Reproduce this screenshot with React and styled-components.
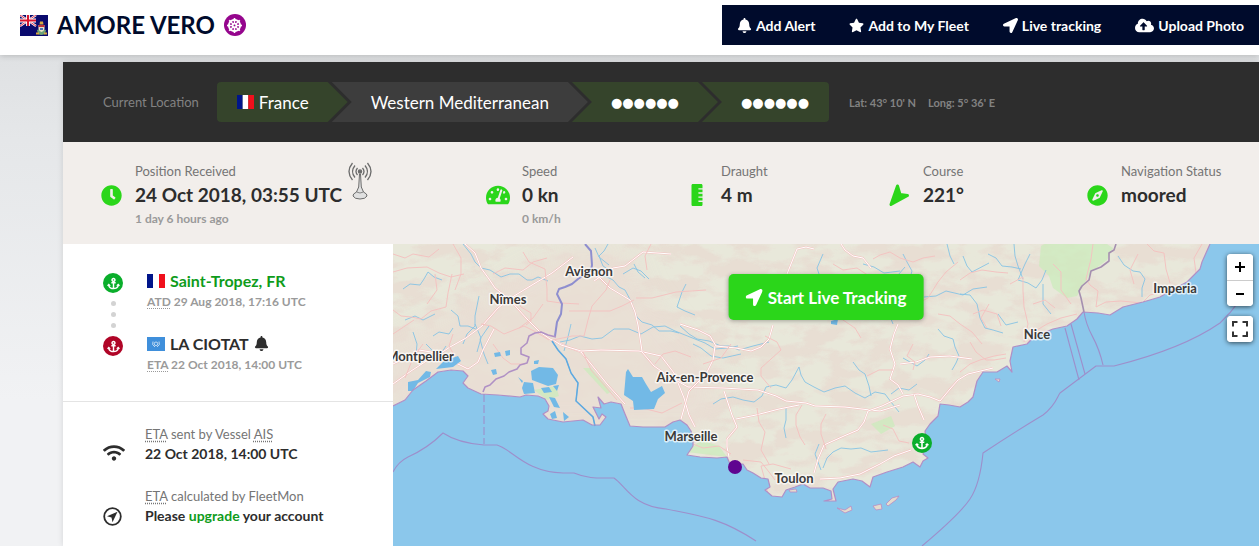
import React from 'react'
import styled, { createGlobalStyle } from 'styled-components'
import {
  FaAnchor,
  FaBell,
  FaClock,
  FaCloudUploadAlt,
  FaCompass,
  FaDharmachakra,
  FaLocationArrow,
  FaRulerVertical,
  FaStar,
  FaTachometerAlt,
  FaWifi
} from 'react-icons/fa'

const GlobalStyle = createGlobalStyle`
  * {
    box-sizing: border-box;
  }
  body {
    margin: 0;
    font-family: Lato, sans-serif;
    color: #2d2d2d;
    background: #eceeef;
  }
  button, a {
    font-family: inherit;
  }
`

const Page = styled.div`
  min-height: 100vh;
  display: flex;
  flex-direction: column;
  background: linear-gradient(#dfe1e3 55px, #e5e7e9 140px, #f1f2f4 400px);
`
const Header = styled.header`
  display: flex;
  justify-content: space-between;
  align-items: flex-start;
  height: 55px;
  padding: 5px 0 0 20px;
  background: #fff;
  box-shadow: 0 1px 6px rgba(0, 0, 0, 0.18);
`
const Title = styled.h1`
  display: flex;
  align-items: center;
  gap: 9px;
  margin: 0;
  font-size: 24px;
  line-height: 40px;
  font-weight: 700;
  color: #000b2c;
`
const Badge = styled.span`
  display: grid;
  place-items: center;
  width: ${(p) => p.$size}px;
  height: ${(p) => p.$size}px;
  border-radius: 50%;
  color: #fff;
  font-size: ${(p) => p.$icon}px;
  background: ${(p) => p.$color};
`
const Toolbar = styled.nav`
  display: flex;
  align-items: center;
  gap: 34px;
  height: 40px;
  padding: 0 15px;
  background: #000b2c;
`
const ToolbarButton = styled.button`
  display: flex;
  align-items: center;
  gap: 4px;
  padding: 0;
  border: 0;
  background: none;
  color: #fff;
  font-size: 14px;
  font-weight: 700;
  svg {
    font-size: 15px;
  }
`
const Card = styled.main`
  flex: 1;
  display: flex;
  flex-direction: column;
  margin: 7px 0 0 63px;
  background: #fff;
  box-shadow: 0 0 6px rgba(0, 0, 0, 0.12);
`
const LocationBar = styled.section`
  display: flex;
  align-items: center;
  height: 80px;
  padding-left: 40px;
  background: #2d2d2d;
  color: #828282;
  font-size: 13px;
`
const Crumbs = styled.div`
  display: flex;
  height: 40px;
  margin: 0 20px 0 18px;
  border-radius: 4px;
  overflow: hidden;
`
const Crumb = styled.div`
  display: flex;
  align-items: center;
  gap: 5px;
  padding: 0 39px;
  margin-right: -16px;
  color: #fff;
  font-size: 17px;
  background: ${(p) => (p.$plain ? '#3d3d3d' : '#35442b')};
  clip-path: polygon(0 0, calc(100% - 20px) 0, 100% 50%, calc(100% - 20px) 100%, 0 100%, 20px 50%);
  &:first-child {
    padding-left: 20px;
    clip-path: polygon(0 0, calc(100% - 20px) 0, 100% 50%, calc(100% - 20px) 100%, 0 100%);
  }
  &:last-child {
    padding-right: 20px;
    margin-right: 0;
    clip-path: polygon(0 0, 100% 0, 100% 100%, 0 100%, 20px 50%);
  }
`
const Dots = styled.span`
  font-family: 'DejaVu Sans', sans-serif;
  font-size: 13px;
`
const Coords = styled.span`
  display: flex;
  gap: 12px;
  font-size: 11px;
  font-weight: 700;
`
const Stats = styled.section`
  display: grid;
  grid-template-columns: 387fr 199fr 202fr 198fr 174fr;
  padding: 19px 0 15px 36px;
  background: #f2eeeb;
`
const StatBox = styled.div`
  display: flex;
  align-items: center;
  gap: 12px;
  white-space: nowrap;
`
const StatIcon = styled.span`
  display: grid;
  place-items: center;
  width: 24px;
  font-size: ${(p) => p.$size}px;
  color: #2bd61a;
`
const StatRow = styled.div`
  display: flex;
  gap: 6px;
`
const StatLabel = styled.div`
  font-size: 13px;
  line-height: 20px;
  color: #757575;
`
const StatValue = styled.div`
  font-size: 19px;
  line-height: 28px;
  font-weight: 700;
`
const StatNote = styled.div`
  height: 20px;
  font-size: 12px;
  line-height: 20px;
  font-weight: 700;
  color: #9a9a9a;
`
const Content = styled.div`
  flex: 1;
  display: flex;
`
const Side = styled.aside`
  flex: 0 0 330px;
`
const Voyage = styled.section`
  display: flex;
  gap: 24px;
  padding: 25px 20px 26px 40px;
  border-bottom: 1px solid #e4e4e4;
`
const Track = styled.div`
  display: flex;
  flex-direction: column;
  align-items: center;
  gap: 8px;
  width: 20px;
  padding-top: 4px;
`
const DotColumn = styled.div`
  display: grid;
  gap: 6px;
`
const Dot = styled.i`
  width: 5px;
  height: 5px;
  border-radius: 50%;
  background: #d3d3d3;
`
const Ports = styled.div`
  display: grid;
  gap: 20px;
`
const Port = styled.div`
  display: flex;
  align-items: center;
  gap: 5px;
  font-size: 16px;
  line-height: 23px;
  font-weight: 700;
`
const PortLink = styled.a`
  color: #0f9c1b;
  text-decoration: none;
`
const PortTime = styled.div`
  font-size: 12px;
  line-height: 20px;
  font-weight: 700;
  color: #9a9a9a;
`
const Abbr = styled.abbr`
  text-decoration: underline dotted;
  text-underline-offset: 2px;
`
const Estimates = styled.section`
  display: grid;
  gap: 22px;
  padding: 22px 20px 18px 40px;
`
const Estimate = styled.div`
  display: flex;
  align-items: flex-end;
  gap: 20px;
`
const EstimateIcon = styled.span`
  display: grid;
  width: 22px;
  font-size: 22px;
`
const EstimateLabel = styled.div`
  font-size: 13px;
  line-height: 20px;
  color: #757575;
`
const EstimateText = styled.div`
  font-size: 14px;
  line-height: 20px;
  font-weight: 700;
`
const MapBox = styled.section`
  position: relative;
  flex: 1;
  min-width: 0;
  background: #8bc7eb;
`
const Chart = styled.svg`
  position: absolute;
  inset: 0;
  width: 100%;
  height: 100%;
`
const City = styled.text`
  font-size: 13px;
  font-weight: 700;
  fill: #3a3a3a;
  stroke: #fff;
  stroke-width: 3px;
  stroke-linejoin: round;
  stroke-opacity: 0.7;
  paint-order: stroke;
`
const TrackButton = styled.button`
  position: absolute;
  top: 30px;
  left: 50%;
  transform: translateX(-50%);
  display: flex;
  align-items: center;
  gap: 5px;
  height: 46px;
  padding: 0 17px;
  border: 0;
  border-radius: 5px;
  background: #2bd61a;
  box-shadow: 0 1px 4px rgba(0, 0, 0, 0.3);
  color: #fff;
  font-size: 17px;
  font-weight: 700;
  white-space: nowrap;
`
const MapControls = styled.div`
  position: absolute;
  top: 10px;
  right: 6px;
  display: grid;
  gap: 10px;
`
const ControlGroup = styled.div`
  display: grid;
  border-radius: 4px;
  overflow: hidden;
  background: #fff;
  box-shadow: 0 1px 5px rgba(0, 0, 0, 0.65);
`
const ControlButton = styled.button`
  display: grid;
  place-items: center;
  width: 26px;
  height: 26px;
  padding: 0;
  border: 0;
  background: #fff;
  color: #000;
  & + & {
    border-top: 1px solid #ccc;
  }
`

const FrenchFlag = ({ width = 18 }) => (
  <svg width={width} height='14' viewBox='0 0 18 14' preserveAspectRatio='none'>
    <path fill='#00158a' d='M0 0h6v14H0z' />
    <path fill='#fff' d='M6 0h6v14H6z' />
    <path fill='#f0101c' d='M12 0h6v14h-6z' />
  </svg>
)

const UnFlag = () => (
  <svg width='18' height='14' viewBox='0 0 18 14'>
    <path fill='#3f8fdb' d='M0 0h18v14H0z' />
    <g fill='none' stroke='#dcebf9' strokeWidth='.8'>
      <path d='M6 4.500Q4.300 8 8 10M12 4.500Q13.700 8 10 10' />
      <circle cx='9' cy='6.800' r='1.800' />
    </g>
  </svg>
)

const CaymanFlag = () => (
  <svg width='28' height='21' viewBox='0 0 28 21'>
    <path fill='#0a0a6e' d='M0 0h28v21H0z' />
    <path stroke='#fff' strokeWidth='2.200' d='M0 0l16 11M16 0L0 11' />
    <path stroke='#e0203a' strokeWidth='.9' d='M0 0l16 11M16 0L0 11' />
    <path stroke='#fff' strokeWidth='3.800' d='M8 0v11M0 5.500h16' />
    <path stroke='#d8152f' strokeWidth='2' d='M8 0v11M0 5.500h16' />
    <path fill='#6da277' d='M17 15q4-2 9 0l-1 4q-4 2-7 0z' />
    <path fill='#e9e3c6' d='M18.500 10h6v4q-1 3-3 3t-3-3z' />
    <path fill='#c2333c' d='M18.500 10h6v2h-6z' />
    <path fill='#4a76b8' d='M19 14h5M20 13h3v2h-3z' />
    <path fill='#d7a941' d='M20 6.500h3l.5 3h-4zM16 17.500h3v2h-3zM24 17.500h3v2h-3z' />
  </svg>
)

const Antenna = () => (
  <svg width='24' height='40' viewBox='0 0 24 38' fill='none' stroke='#6c6c6c' strokeWidth='1.300'>
    <path d='M4.500 1Q-2.500 9.500 4.500 18M19.500 1Q26.500 9.500 19.500 18' />
    <path d='M7 3.500Q2 9.500 7 15.500M17 3.500Q22 9.500 17 15.500' />
    <path d='M9.500 6Q6.500 9.500 9.500 13M14.500 6Q17.500 9.500 14.500 13' />
    <circle cx='12' cy='9.500' r='1.600' fill='#6c6c6c' />
    <path fill='#e0e0e0' strokeWidth='1' d='M11.500 12h1l.8 13 2.200 5q4 2 3.500 4-1.500 3-7 3t-7-3q-.5-2 3.500-4l2.200-5z' />
    <path d='M8.500 30q3.500 2 7 0' strokeWidth='.8' />
  </svg>
)

const CourseArrow = () => (
  <svg width='22' height='24' viewBox='0 0 22 24'>
    <path
      fill='currentColor'
      stroke='currentColor'
      strokeWidth='3'
      strokeLinejoin='round'
      d='M9.500 3l2.500 8.500 7.500 1L3 21.500z'
    />
  </svg>
)

const RouteIcon = () => (
  <svg width='19' height='19' viewBox='0 0 19 19'>
    <circle cx='9.500' cy='9.500' r='8.300' fill='none' stroke='currentColor' strokeWidth='1.800' />
    <path fill='currentColor' d='M14.500 4.800L4 9.200l4.500 1.200 1 4.800z' />
  </svg>
)

const FullscreenIcon = () => (
  <svg width='16' height='16' viewBox='0 0 16 16' fill='none' stroke='#333' strokeWidth='2'>
    <path d='M1 5.500V1h4.500M10.500 1H15v4.500M15 10.500V15h-4.500M5.500 15H1v-4.500' />
  </svg>
)

const coast =
  'M0 162L12 156 20 146 33 137 45 128 58 126 70 127 75 132 70 139 75 144 88 150 105 151 127 153 133 151 145 152 152 155 156 162 155 167 150 170 155 175 170 178 190 176 199 181 207 181 213 173 209 170 206 175 200 163 208 164 205 153 211 160 218 158 228 160 232 170 237 182 250 183 272 183 280 178 287 176 294 181 298 187 300 194 300 202 294 211 307 213 324 214 334 213 337 220 350 220 354 226 360 229 368 234 375 235 377 243 372 246 379 252 389 253 393 246 402 243 410 240 417 244 430 244 438 247 439 255 431 257 443 257 440 245 445 238 460 235 469 237 477 243 480 233 494 228 510 223 520 218 527 223 530 217 535 214 530 210 534 202 532 187 537 180 545 172 547 160 556 161 567 163 575 158 580 153 584 137 590 128 604 128 614 122 619 128 617 117 620 103 634 100 639 95 650 89 660 85 674 82 684 75 690 68 705 69 717 71 730 63 750 58 767 53 777 47 794 38 807 25 809 18 817 0'

const lakes = [
  'M43 125l8-8 14-5 3 5-8 6z',
  'M15 147v-9l10-2 8-9 5 1-1 5-12 6-5 8z',
  'M138 127l8-4 14 1 5 7-2 9-8 2-8-3-8-3z',
  'M131 138l9 1 2 10-11 1-2-6zM125 133l5 4-1 2z',
  'M233 128l2-3 5 8 9 0 4 7 5 8 11-6 3 7-7 6-4 10-20 1-1-9-9-6z',
  'M148 144l8-1 3 5-8 1zM160 142l6-1-2 6zM156 153l6 1 5 10-6-1zM157 170l5-3 2 7-5 1zM170 168l6 5-5 4z',
  'M101 109l6-1 1 4-6 1zM112 107l5-1 0 5-4 1zM141 117l5-1-1 4h-4zM98 126l5-1 1 5-4 1z',
  'M438 77l7-2-1 6-6-1z'
]

const rivers = [
  'M159 97l6 9 8 9 5 14 7 10-2 18 17 16 2 9',
  'M70 0l8 10 4 8 6 6 9 2 11 7 9-3 9 0 8 6 5 0 6-3 10 4',
  'M196 25l8 7 8 0 8 4 6 7 6 3 7 13M240 64l4 9 5 5 10 3 7 6 12 0 8 2',
  'M287 82l9 8 8 5 12 2 12 5 8 0 10 4 14-4 16-4',
  'M167 98l10-2 10-4 12 3 10-1 12-9 15 0 12 5 12-7 12-1 10 5 10 4 20 8 10 6 12-1 11-2',
  'M10 45l7-5 10 1 4-6 4-7 6 5 8 3M20 88l4 12-1 12M58 66l7 6 2 10 8 0 10 4',
  'M320 160l8-5 12-2 10 3 11 2 8-6 4-9 10-2 10 3 6-8 7-13 2 8 4 7 9 5 10 5 11-4 10-2 10 7 10 5 10-6 10 2 6 8 8 10',
  'M470 20l11 3 10 6 16-2M531 53l12-1 10-5 17 4 10-6 14-2M500 80l-4-10-6-12 4-10 3-10 8-7 7-8',
  'M567 50l10 1 7 9 3 14 5 10 8 2 10 3M595 10l8 4 6 8 10 1 9 2M621 0l1 12 3 10 5 13',
  'M637 10l-5 10-7 16 10 3 8 5 6-8 4-10M650 40v20l8 10M725 12l6 9 9 6 7 1 5 7-3 9 0 9',
  'M430 224l4-10 6-6 8-4 10 1 10-1 10 4 17-2M393 164l0 12-2 8 2 10M426 200l-4 10 6 16',
  'M545 85l6 7 9 3 2 8 4 9-3 7-4 7M215 0l-4 7-5 5 4 10 8 5M241 20l4 8 7 6M293 40l-4 8-5 15 8 4 10 4',
  'M70 100l4-10 8-8 0-10 4-20M33 100l5 5 7 9 8-12M95 120l-4-10-4-15 9-13M178 80l-3 13-4 14M82 80l6 14-4 14',
  'M510 10l4 8 5 9-5 18M554 0l3 12 4 8M570 12l4 10 5 6 17-9M536 110l-4 6-8 6-14-8',
  'M605 70l8 11 12-3M460 118l6 8 6 4 4 12 2 10M300 100l8 4 10 8 12 2 18-4',
  'M202 4l4 9 10 8M230 30l10-6 8 3 8 8M40 92l6-4 10 2 4-6M12 76l10-4 8 4 12-6',
  'M346 42l-6 10-2 14M480 66l8-8 10 2 6-6M430 10l-6 14 4 12 8 6M524 140l-8 6-10-2-8 6'
]

const roads = [
  'M0 140l18-13 17-11 10-5 12-8 16-9 16-12 16-18 16-12 18-11 20-12 21-16',
  'M72 0l10 9 6 15 8 11 6 9 14 11 18 20 13 13 10 7 18 8 13 5 10 12 16 20 18 20',
  'M0 120l10-5 8-3 8-6 12 2 17 7 20 10 10-7 5-12 11-21',
  'M160 96l8 5 20 6 20-1 38 1 22 5 13 17 4 10 6 15 5 17 6 12',
  'M196 28l11 6 10 10 20 12 5 12 3 13 4 26M201 37l19-13 12-2 18-14 28 2',
  'M249 108l12 14 16 11 18 10 35 1 17 1 18 1 18 6 10 5 20 2 9 3 30 1 25 3 10 1 20-6',
  'M287 80l18 6 12 6 6 10 20 2 15 3 10-4 8-8 4-14M322 102l-2 14-6 12-8 9-10 10-8 28',
  'M331 147l4 12 4 12 5 12-10 12 0 8 2 10M343 175l20-4 23-6 20-4',
  'M404 5l-4 10-6 15-3 15M404 5l9-2 8 2M448 0l4 6 8 6 10 2 8 10',
  'M475 167l-4 11-6 8-14 6-20 9-6 14-4 14M475 167l14-5 21-10 15-2 12 3 10 4 10-12 8-9 10-6 25-6',
  'M521 150l4 12 6 14M427 235l20-1 20-4 20-10 14-8 17-6',
  'M505 80l-4 10-4 15 5 15-5 15 8 6 5 9M507 120l16-2 14-5 20-1 22 3',
  'M617 40l13-7 0 14 1 16 4 17-4 18M567 36l10-7 12-3 14 2 12 1',
  'M567 128l10-8 10-4 14-4 12-2M577 98l6 10 10 8 8 0 12-2M634 100l10-14 10-6 14-6 16-4',
  'M0 28l14-4 20-1 12 6 12 4 13-3M0 66l8 6 10 1 10 2 10-8 15-4 2-14 4-19M0 90l21-14',
  'M130 8l6 10 16 7 2 20v12l14 2 18 1M176 67h41l12-5 12-6M243 54l16 0 24-6 30-2',
  'M480 15l7-4 10-3 10 6 13 4 10-4 12-2M523 60l12-6 10-16 8-10 12-10M375 250l-3-14-4-14 12-2 18 5',
  'M700 0l-2 15-5 20 4 6 8 6-2 16M754 0l7 7 10 2 2 16 4 14M809 0l-8 14 2 15',
  'M703 63l10-5 15-1 21 2 8-8 12-3M409 161l-6 10 0 10 4 12 5 8',
  'M433 170l-5 10 0 10 5 15M545 70l12 2 10 8 12 8 10 12M350 216l18 2 8 10 6 8M237 164l12 0 20 5 20-10',
  'M217 36l-4 10-14 16-4 14-4 16-12 0-19 4M88 80l10 2 13 8 20-8 12 6 13 8M122 55l6 8 10 6 0 8-5 4',
  'M0 10l12 4 8-4 16 3 10-8M34 60l10-14-2-16M60 0l8 14 0 16-6 16M100 30l12-6 18 2 10-8 14-4',
  'M258 0l-6 12 2 14M262 120l8-10 12-3 16 6M310 120l18-6 10-14M372 92l12 6 4 8-20 18 0 8 10 12',
  'M440 20l10 6 14-2 12 8M420 60l10 10 14 2 18 12 6 10M520 100l-6 12 8 6-2 8M500 126l-14 0-12 6',
  'M640 60l12-4 10 8M580 70l10-4 14 4 4 12M745 10l-8 16 4 14M660 20l8 8 0 18 10 14M596 60l-8 14 6 10',
  'M364 164l2 14 6 10-4 18 8 14M300 200l10 4 16-2 12 8M490 181l10 4 6 12 10 2M30 100l-10 14-8 20',
  'M100 100l10 14 8 6 14 0M190 108l8 18 14 16 12 14M60 90l-4 12 8 14M150 60l-10 14-14 10'
]

const cities = [
  { name: 'Avignon', x: 196, y: 32 },
  { name: 'Nîmes', x: 115, y: 60 },
  { name: 'Montpellier', x: 27, y: 117 },
  { name: 'Aix-en-Provence', x: 312, y: 138 },
  { name: 'Marseille', x: 298, y: 197 },
  { name: 'Toulon', x: 401, y: 239 },
  { name: 'Nice', x: 644, y: 95 },
  { name: 'Imperia', x: 782, y: 49 }
]

const CoastMap = () => (
  <Chart viewBox='0 0 866 302' preserveAspectRatio='xMidYMin slice'>
    <defs>
      <clipPath id='land'>
        <path d={coast + 'V0H0z'} />
      </clipPath>
      <filter id='terrain' x='0' y='0' width='100%' height='100%'>
        <feTurbulence type='fractalNoise' baseFrequency='.03 .06' numOctaves='6' seed='11' />
        <feColorMatrix values='0 0 0 0 .81  0 0 0 0 .83  0 0 0 0 .72  5 0 0 0 -1.900' />
      </filter>
      <filter id='soft'>
        <feGaussianBlur stdDeviation='12' />
      </filter>
    </defs>
    <path fill='#8bc7eb' d='M0 0h866v302H0z' />
    <path fill='#e8ded3' d={coast + 'V0H0z'} />
    <g clipPath='url(#land)'>
      <g opacity='.75' filter='url(#terrain)'>
        <path d='M0 0h866v302H0z' fill='#000' />
      </g>
      <path
        fill='#e9ded4'
        opacity='.85'
        filter='url(#soft)'
        d='M-20 105l80-38 60-35 60-32 60 10 10 35 40 50 40 30-10 60H0z'
      />
      <path
        fill='#c8ecb9'
        opacity='.65'
        d='M648 2l10-6h50l12 8-6 12-16 12-8 14-6 10-10 2-14-10-4-12-10-10zM294 208l14-12 18 6 8 11zM478 180l20-8 4 10-14 8zM141 146l22-4 3 10-12 4zM190 124l8 0 20 24-4 2z'
      />
    </g>
    <g fill='none' stroke='#86c3e4' strokeWidth='.9' strokeLinejoin='round'>
      {rivers.map((d) => (
        <path key={d} d={d} />
      ))}
    </g>
    <g fill='none' strokeLinejoin='round' clipPath='url(#land)'>
      {roads.map((d, i) => (
        <g key={d}>
          <path d={d} stroke='#f3c3c1' strokeWidth={i < 12 ? 2 : 1} />
          {i < 12 && <path d={d} stroke='#fff' strokeWidth='1' />}
        </g>
      ))}
    </g>
    <g fill='#72b9e6'>
      {lakes.map((d) => (
        <path key={d} d={d} />
      ))}
    </g>
    <path fill='none' stroke='#5ea9e0' strokeWidth='1.500' d={rivers[0]} />
    <path fill='none' stroke='#b08fc6' strokeWidth='1.200' strokeLinejoin='round' d={coast} />
    <g fill='#e4dccd' stroke='#b98cc4' strokeWidth='.8'>
      <path d='M444 264l8 2 6-4 1 4-7 3zM480 262l8-2 1 5-6 1zM493 260l6-6 7-2-3 4-8 6zM396 246l7-1 1 3-7 0zM602 135l5 0-1 3z' />
    </g>
    <g fill='none' stroke='#9d8fcb' strokeWidth='1.100' strokeLinejoin='round'>
      <path strokeWidth='2' stroke='#8e8ecf' d='M192 0l6 7 1 14-1 6-7 4-6 4-6 5-7 3-6 2-2 5 5 10-1 10-4 8-2 14' />
      <path
        stroke='#b091c5'
        strokeWidth='1.600'
        d='M163 93l-8-2-7-3-6 1-6 3-2 7-6 5 0 6 8 3-2 6-7 2-3 4-8 3-5 4-8 3-6 6-5 2-2 5'
      />
      <path strokeDasharray='8 3' d='M91 150v50' />
      <path d='M0 228q5-10 15-15 20-9 35-24 15 10 41 12h13c15 4 28 27 66 28h11c14 6 24 5 40 5 12 8 18 28 52 31 35 7 55 9 90 32' />
      <path d='M529 302q38-32 48-47 10-15 13-46 30-20 60-38c13-10 14-18 17-22l36-27h18c40-10 80-25 106-43 16-15 25-28 32-46' />
      <path d='M672 84l14 52M678 80l14 50M691 68c4 25 12 22 19 53' />
      <path stroke='#a58fb0' strokeWidth='1.600' d='M723 0l-2 6-5 3v8l-8 6-10 4-2 9-7 6-3 5 2 7 3 14' />
    </g>
    {cities.map((c) => (
      <City key={c.name} x={c.x} y={c.y} textAnchor='middle'>
        {c.name}
      </City>
    ))}
    <circle cx='342' cy='223' r='7' fill='#5f0590' />
    <circle cx='529' cy='199' r='10' fill='#0aae2b' />
    <FaAnchor x='522' y='192' size={14} color='#fff' />
  </Chart>
)

const actions = [
  { label: 'Add Alert', icon: <FaBell /> },
  { label: 'Add to My Fleet', icon: <FaStar /> },
  { label: 'Live tracking', icon: <FaLocationArrow /> },
  { label: 'Upload Photo', icon: <FaCloudUploadAlt size={19} /> }
]

const stats = [
  { label: 'Position Received', value: '24 Oct 2018, 03:55 UTC', note: '1 day 6 hours ago', icon: <FaClock />, extra: <Antenna /> },
  { label: 'Speed', value: '0 kn', note: '0 km/h', icon: <FaTachometerAlt />, size: 24 },
  { label: 'Draught', value: '4 m', icon: <FaRulerVertical />, size: 22 },
  { label: 'Course', value: '221°', icon: <CourseArrow /> },
  { label: 'Navigation Status', value: 'moored', icon: <FaCompass /> }
]

const Stat = ({ label, value, note, icon, size = 21, extra }) => (
  <StatBox>
    <StatIcon $size={size}>{icon}</StatIcon>
    <StatRow>
      <div>
        <StatLabel>{label}</StatLabel>
        <StatValue>{value}</StatValue>
        <StatNote>{note}</StatNote>
      </div>
      {extra}
    </StatRow>
  </StatBox>
)

const App = () => (
  <Page>
    <GlobalStyle />
    <Header>
      <Title>
        <CaymanFlag />
        AMORE VERO
        <Badge $size={22} $icon={15} $color='#95058d'>
          <FaDharmachakra />
        </Badge>
      </Title>
      <Toolbar>
        {actions.map((a) => (
          <ToolbarButton key={a.label}>
            {a.icon}
            {a.label}
          </ToolbarButton>
        ))}
      </Toolbar>
    </Header>
    <Card>
      <LocationBar>
        Current Location
        <Crumbs>
          <Crumb>
            <FrenchFlag width={17} />
            France
          </Crumb>
          <Crumb $plain>Western Mediterranean</Crumb>
          <Crumb>
            <Dots>●●●●●●</Dots>
          </Crumb>
          <Crumb>
            <Dots>●●●●●●</Dots>
          </Crumb>
        </Crumbs>
        <Coords>
          <span>Lat: 43° 10' N</span>
          <span>Long: 5° 36' E</span>
        </Coords>
      </LocationBar>
      <Stats>
        {stats.map((s) => (
          <Stat key={s.label} {...s} />
        ))}
      </Stats>
      <Content>
        <Side>
          <Voyage>
            <Track>
              <Badge $size={20} $icon={13} $color='#0aae2b'>
                <FaAnchor />
              </Badge>
              <DotColumn>
                <Dot />
                <Dot />
                <Dot />
              </DotColumn>
              <Badge $size={20} $icon={13} $color='#b00527'>
                <FaAnchor />
              </Badge>
            </Track>
            <Ports>
              <div>
                <Port>
                  <FrenchFlag />
                  <PortLink href='#saint-tropez'>Saint-Tropez, FR</PortLink>
                </Port>
                <PortTime>
                  <Abbr>ATD</Abbr> 29 Aug 2018, 17:16 UTC
                </PortTime>
              </div>
              <div>
                <Port>
                  <UnFlag />
                  LA CIOTAT
                  <FaBell size={15} />
                </Port>
                <PortTime>
                  <Abbr>ETA</Abbr> 22 Oct 2018, 14:00 UTC
                </PortTime>
              </div>
            </Ports>
          </Voyage>
          <Estimates>
            <Estimate>
              <EstimateIcon>
                <FaWifi />
              </EstimateIcon>
              <div>
                <EstimateLabel>
                  <Abbr>ETA</Abbr> sent by Vessel <Abbr>AIS</Abbr>
                </EstimateLabel>
                <EstimateText>22 Oct 2018, 14:00 UTC</EstimateText>
              </div>
            </Estimate>
            <Estimate>
              <EstimateIcon>
                <RouteIcon />
              </EstimateIcon>
              <div>
                <EstimateLabel>
                  <Abbr>ETA</Abbr> calculated by FleetMon
                </EstimateLabel>
                <EstimateText>
                  Please <PortLink href='#upgrade'>upgrade</PortLink> your account
                </EstimateText>
              </div>
            </Estimate>
          </Estimates>
        </Side>
        <MapBox>
          <CoastMap />
          <TrackButton>
            <FaLocationArrow />
            Start Live Tracking
          </TrackButton>
          <MapControls>
            <ControlGroup>
              <ControlButton aria-label='Zoom in'>
                <svg width='10' height='10' viewBox='0 0 10 10'>
                  <path stroke='#000' strokeWidth='2' d='M0 5h10M5 0v10' />
                </svg>
              </ControlButton>
              <ControlButton aria-label='Zoom out'>
                <svg width='10' height='10' viewBox='0 0 10 10'>
                  <path stroke='#000' strokeWidth='2' d='M1 5h8' />
                </svg>
              </ControlButton>
            </ControlGroup>
            <ControlGroup>
              <ControlButton aria-label='Full screen'>
                <FullscreenIcon />
              </ControlButton>
            </ControlGroup>
          </MapControls>
        </MapBox>
      </Content>
    </Card>
  </Page>
)

export default App
